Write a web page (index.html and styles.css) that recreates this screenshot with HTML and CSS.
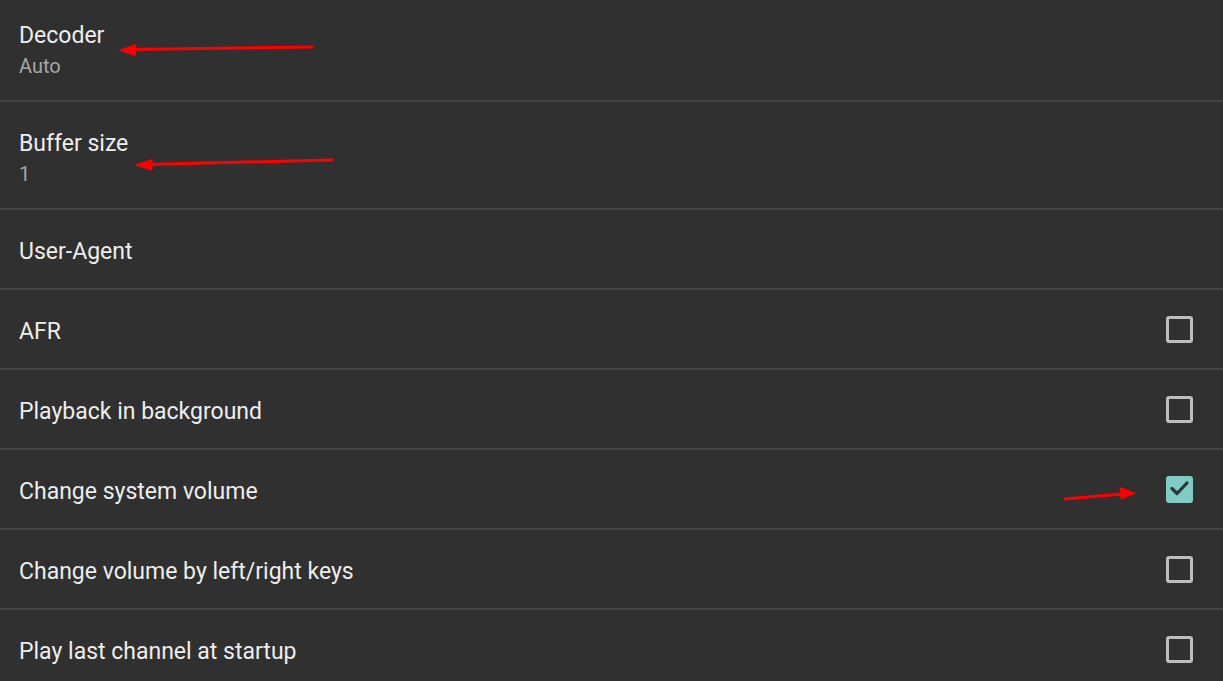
FILE: index.html
```html
<!DOCTYPE html>
<html>
<head>
<meta charset="utf-8">
<link rel="stylesheet" href="styles.css">
</head>
<body>
<div class="screen">
  <div class="list">
    <div class="row two">
      <div class="text">
        <div class="title">Decoder</div>
        <div class="summary">Auto</div>
      </div>
    </div>
    <div class="row two">
      <div class="text">
        <div class="title">Buffer size</div>
        <div class="summary">1</div>
      </div>
    </div>
    <div class="row one">
      <div class="text"><div class="title">User-Agent</div></div>
    </div>
    <div class="row one">
      <div class="text"><div class="title">AFR</div></div>
      <span class="check"></span>
    </div>
    <div class="row one">
      <div class="text"><div class="title">Playback in background</div></div>
      <span class="check"></span>
    </div>
    <div class="row one">
      <div class="text"><div class="title">Change system volume</div></div>
      <span class="check on">
        <svg viewBox="0 0 27 27" width="27" height="27"><path d="M6 12.5 L11 17.5 L21 7" fill="none" stroke="#2f3434" stroke-width="3.2" stroke-linecap="round" stroke-linejoin="round"/></svg>
      </span>
    </div>
    <div class="row one">
      <div class="text"><div class="title">Change volume by left/right keys</div></div>
      <span class="check"></span>
    </div>
    <div class="row one">
      <div class="text"><div class="title">Play last channel at startup</div></div>
      <span class="check"></span>
    </div>
  </div>
  <svg class="arrows" width="1223" height="681" viewBox="0 0 1223 681">
    <g fill="#ff0000" stroke="#ff0000" stroke-linecap="round">
      <line x1="312" y1="47" x2="132" y2="49.5" stroke-width="3"/>
      <polygon points="120,50 136,44.5 135,55.5" stroke-width="1"/>
      <line x1="332" y1="160" x2="148" y2="164.5" stroke-width="3"/>
      <polygon points="136,165 152,159.5 152,170" stroke-width="1"/>
      <line x1="1065" y1="499" x2="1122" y2="494" stroke-width="3"/>
      <polygon points="1135,493 1120,487.5 1121,499" stroke-width="1"/>
    </g>
  </svg>
</div>
</body>
</html>
```
FILE: styles.css
```css
html, body {
  margin: 0;
  padding: 0;
  background: #303030;
}
.screen {
  position: relative;
  width: 1223px;
  height: 681px;
  overflow: hidden;
  background: #303030;
  font-family: Roboto, "Liberation Sans", sans-serif;
}
.list {
  margin-top: -6px;
  display: flex;
  flex-direction: column;
}
.row {
  display: flex;
  align-items: center;
  justify-content: space-between;
  padding: 0 30px 0 19px;
  border-bottom: 2px solid #434343;
  box-sizing: border-box;
}
.row.two {
  height: 108px;
  align-items: flex-start;
}
.row.two .text {
  padding-top: 28px;
}
.row.one {
  height: 80px;
}
.row.one .text {
  padding-top: 4px;
}
.title {
  font-size: 23px;
  line-height: 27px;
  color: #ededed;
}
.summary {
  margin-top: 5px;
  font-size: 20px;
  line-height: 24px;
  color: #a6a6a6;
}
.check {
  width: 27px;
  height: 27px;
  box-sizing: border-box;
  border: 3px solid #bdbdbd;
  border-radius: 3px;
  display: block;
  position: relative;
}
.check.on {
  background: #80cbc4;
  border-color: #80cbc4;
}
.check.on svg {
  position: absolute;
  left: -3px;
  top: -3px;
  display: block;
}
.arrows {
  position: absolute;
  left: 0;
  top: 0;
  pointer-events: none;
}
```
